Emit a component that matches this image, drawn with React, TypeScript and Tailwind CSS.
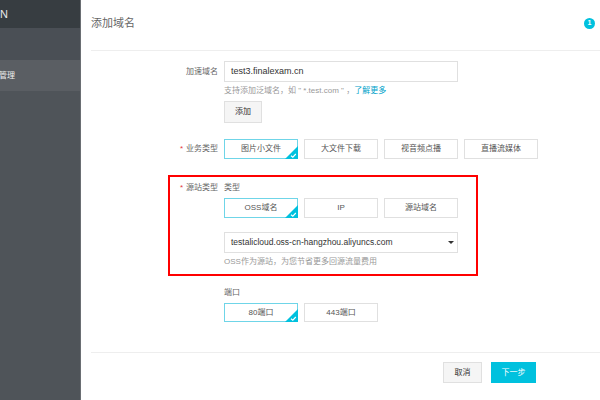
import React from "react";

const font = { fontFamily: '"Liberation Sans", "Noto Sans CJK SC", sans-serif' };

function Corner() {
  return (
    <svg className="absolute right-[-1px] bottom-[-1px]" width="13" height="13" viewBox="0 0 13 13">
      <polygon points="13,0 13,13 0,13" fill="#00c1de" />
      <path d="M6 9.8 L7.8 11.2 L10.8 8" stroke="#fff" strokeWidth="1.1" fill="none" />
    </svg>
  );
}

function Opt({ label, active, h = "h-[20px]" }: { label: string; active?: boolean; h?: string }) {
  return (
    <div
      className={`relative w-[74px] ${h} flex items-center justify-center text-[8px] text-[#555] bg-white border ${
        active ? "border-[#6fd5e8]" : "border-[#e0e0e0]"
      }`}
    >
      {label}
      {active && <Corner />}
    </div>
  );
}

export default function App() {
  return (
    <div className="w-[600px] h-[400px] flex overflow-hidden bg-white" style={font}>
      {/* sidebar */}
      <div className="w-[81px] shrink-0 flex flex-col bg-[#4f5459] border-r border-[#6a6e73] overflow-hidden">
        <div className="h-[28px] bg-[#373d41] flex items-center overflow-hidden">
          <span className="text-[#e8e8e8] text-[11px] whitespace-nowrap -ml-[16px]">CDN</span>
        </div>
        <div className="h-[32px] bg-[#4a4f55]" />
        <div className="h-[31px] bg-[#5a5e63] flex items-center overflow-hidden">
          <span className="text-[#eee] text-[8px] whitespace-nowrap -ml-[17px]">域名管理</span>
        </div>
        <div className="flex-1 bg-[#4f5459]" />
      </div>

      {/* main */}
      <div className="flex-1 flex flex-col">
        <div className="h-[51px] ml-[10px] border-b border-[#eeeeee] flex items-center justify-between pb-[3px]">
          <span className="text-[11px] text-[#666]">添加域名</span>
          <span className="w-[11px] h-[11px] rounded-full bg-[#00c1de] text-white text-[7px] font-bold flex items-center justify-center mr-[5px]">
            1
          </span>
        </div>

        <div className="flex flex-col pl-[87px] h-[301px]">
          {/* 加速域名 */}
          <div className="flex mt-[10px]">
            <div className="w-[56px] text-right pr-[6px] text-[8px] text-[#666] leading-[21px]">加速域名</div>
            <div className="flex flex-col">
              <div className="w-[234px] h-[21px] border border-[#e0e0e0] flex items-center px-[6px] text-[9px] text-[#333]">
                test3.finalexam.cn
              </div>
              <div className="text-[8px] text-[#999] mt-[3px] leading-[12px]">
                支持添加泛域名，如 " *.test.com " ，<span className="text-[#00a2ca]">了解更多</span>
              </div>
              <div className="mt-[4px] w-[38px] h-[22px] bg-[#f5f5f5] border border-[#e0e0e0] flex items-center justify-center text-[8px] text-[#333]">
                添加
              </div>
            </div>
          </div>

          {/* 业务类型 */}
          <div className="flex mt-[16px] items-center">
            <div className="w-[56px] text-right pr-[6px] text-[8px] text-[#666] whitespace-nowrap">
              <span className="text-[#e4393c] mr-[3px]">*</span>业务类型
            </div>
            <div className="flex gap-[6px]">
              <Opt label="图片小文件" active />
              <Opt label="大文件下载" />
              <Opt label="视音频点播" />
              <Opt label="直播流媒体" />
            </div>
          </div>

          {/* red box */}
          <div className="mt-[16px] w-[310px] h-[101px] border-2 border-[#ff0000] flex pt-[5px]">
            <div className="w-[54px] pr-[6px] text-right text-[8px] text-[#666] whitespace-nowrap leading-[12px]">
              <span className="text-[#e4393c] mr-[3px]">*</span>源站类型
            </div>
            <div className="flex flex-col">
              <div className="text-[8px] text-[#666] leading-[12px]">类型</div>
              <div className="flex gap-[6px] mt-[4px]">
                <Opt label="OSS域名" active />
                <Opt label="IP" />
                <Opt label="源站域名" />
              </div>
              <div className="mt-[14px] w-[234px] h-[21px] border border-[#e0e0e0] flex items-center justify-between pl-[6px] pr-[3px] text-[8.5px] text-[#333]">
                <span>testalicloud.oss-cn-hangzhou.aliyuncs.com</span>
                <svg width="6" height="3" viewBox="0 0 6 3">
                  <polygon points="0,0 6,0 3,3" fill="#333" />
                </svg>
              </div>
              <div className="text-[8px] text-[#999] mt-[3px] leading-[12px]">OSS作为源站，为您节省更多回源流量费用</div>
            </div>
          </div>

          {/* 端口 */}
          <div className="ml-[56px] mt-[11px] flex flex-col">
            <div className="text-[8px] text-[#666] leading-[12px]">端口</div>
            <div className="flex gap-[6px] mt-[4px]">
              <Opt label="80端口" active h="h-[19px]" />
              <Opt label="443端口" h="h-[19px]" />
            </div>
          </div>
        </div>

        <div className="ml-[10px] border-t border-[#eeeeee] flex justify-end pr-[64px] pt-[9px] gap-[9px]">
          <div className="w-[39px] h-[21px] bg-[#f5f5f5] border border-[#e0e0e0] flex items-center justify-center text-[8px] text-[#333]">
            取消
          </div>
          <div className="w-[45px] h-[21px] bg-[#00c1de] flex items-center justify-center text-[8px] text-white">
            下一步
          </div>
        </div>
      </div>
    </div>
  );
}
